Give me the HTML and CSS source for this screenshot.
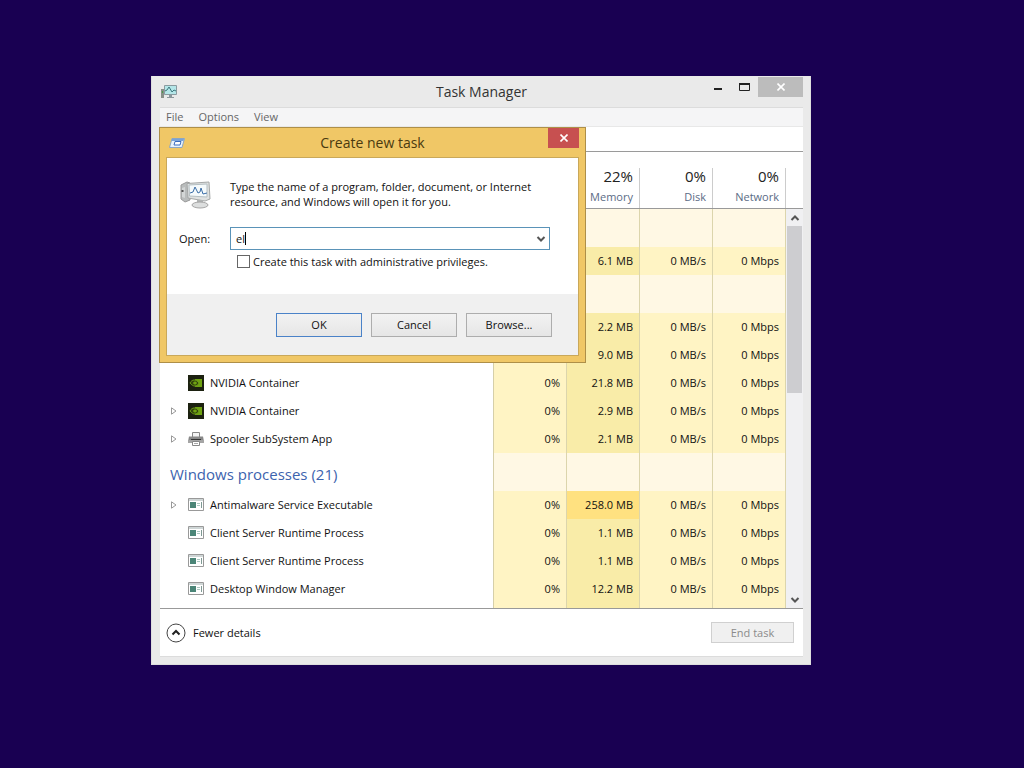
FILE: index.html
```
<!DOCTYPE html>
<html lang="en">
<head>
<meta charset="utf-8">
<title>Task Manager</title>
<link rel="stylesheet" href="styles.css">
</head>

<body>

<!-- shared icons -->
<svg class="defs" aria-hidden="true">
  <symbol id="i-arrow" viewBox="0 0 6 8">
    <path d="M.5 .8v6.4L5 4z" fill="#fff" stroke="#999"/>
  </symbol>
  <symbol id="i-nvidia" viewBox="0 0 16 16">
    <path d="M0 0h16v16H0z" fill="#1c2110"/>
    <path d="M7 4h7v8H7z" fill="#6fa312"/>
    <path d="M2 8c2-4 6-4 9 0-2 4-6 4-9 0z" fill="#33450c" stroke="#6b9a17"/>
    <path d="M5 8c1-2 3-2 4 0-1 2-3 2-4 0z" fill="#6fa312"/>
  </symbol>
  <symbol id="i-printer" viewBox="0 0 16 16">
    <path d="M4.500 1.500h7v5h-7z" fill="#f4f4f4" stroke="#888"/>
    <path d="M1 5.500h14l1 5H0z" fill="#888"/>
    <path d="M0 9h16v3H0z" fill="#a5a5a5"/>
    <path d="M3 8h10v1H3z" fill="#333"/>
    <path d="M4.500 10.500h7v4h-7z" fill="#fff" stroke="#888"/>
    <path d="M6 12.500h4" stroke="#aaa"/>
  </symbol>
  <symbol id="i-exe" viewBox="0 0 16 14">
    <path d="M.5 .5h15v12H.5z" fill="#fff" stroke="#999"/>
    <path d="M1 1h14v2H1z" fill="#cfd6d6"/>
    <path d="M2 4h6v6H2z" fill="#4b8577"/>
    <path d="M9 5.500h3M9 7.500h3" stroke="#aac8c0"/>
    <path d="M13.500 4v6" stroke="#7f9a94"/>
  </symbol>
  <symbol id="i-up" viewBox="0 0 10 6">
    <path d="M1.500 5L5 1.500 8.500 5" fill="none" stroke="#555" stroke-width="2"/>
  </symbol>
  <symbol id="i-down" viewBox="0 0 10 6">
    <path d="M1.500 1L5 4.500 8.500 1" fill="none" stroke="#555" stroke-width="2"/>
  </symbol>
  <symbol id="i-close" viewBox="0 0 8 8">
    <path d="M.5 .5l7 7M7.500 .5l-7 7" fill="none" stroke="#fff" stroke-width="1.600"/>
  </symbol>
</svg>

<div class="window">
  <div class="titlebar">
    <svg class="app-icon" viewBox="0 0 16 14">
      <path d="M0 4h3v9H0z" fill="#888f88"/>
      <path d="M1 6h1v2H1z" fill="#4a9a4a"/>
      <path d="M3.500 .5h12v9h-12z" fill="#b4e6e8" stroke="#8b9ba0"/>
      <path d="M4 6l2-1 2-3 3 5 2-2 2 1" fill="none" stroke="#3a777d"/>
      <path d="M8 10h3v2H8zM6 12h7v1H6z" fill="#8c979c"/>
    </svg>
    <h1>Task Manager</h1>
    <div class="controls">
      <button type="button" aria-label="Minimize"><svg width="8" height="8"><path d="M0 5h8v2H0z" fill="#222"/></svg></button>
      <button type="button" aria-label="Maximize"><svg width="11" height="8"><path d="M.5 1h10v6.500H.5z" fill="none" stroke="#222"/><path d="M0 0h11v2H0z" fill="#222"/></svg></button>
      <button type="button" class="close" aria-label="Close"><svg width="8" height="8"><use href="#i-close"/></svg></button>
    </div>
  </div>

  <div class="client">
    <div class="menu">
      <button type="button">File</button>
      <button type="button">Options</button>
      <button type="button">View</button>
    </div>
    <div class="tabs"></div>

    <div class="list">
      <table>
        <thead>
          <tr>
            <th class="name"></th>
            <th></th>
            <th><b>22%</b>Memory</th>
            <th><b>0%</b>Disk</th>
            <th><b>0%</b>Network</th>
          </tr>
        </thead>
        <tbody>
          <tr class="group"><th></th><td></td><td></td><td></td><td></td></tr>
          <tr><th></th><td></td><td>6.1 MB</td><td>0 MB/s</td><td>0 Mbps</td></tr>
          <tr class="group"><th></th><td></td><td></td><td></td><td></td></tr>
          <tr><th></th><td></td><td>2.2 MB</td><td>0 MB/s</td><td>0 Mbps</td></tr>
          <tr><th></th><td></td><td>9.0 MB</td><td>0 MB/s</td><td>0 Mbps</td></tr>
          <tr>
            <th><div class="proc"><i></i><svg class="icon"><use href="#i-nvidia"/></svg>NVIDIA Container</div></th>
            <td>0%</td><td>21.8 MB</td><td>0 MB/s</td><td>0 Mbps</td>
          </tr>
          <tr>
            <th><div class="proc"><i><svg width="6" height="8"><use href="#i-arrow"/></svg></i><svg class="icon"><use href="#i-nvidia"/></svg>NVIDIA Container</div></th>
            <td>0%</td><td>2.9 MB</td><td>0 MB/s</td><td>0 Mbps</td>
          </tr>
          <tr>
            <th><div class="proc"><i><svg width="6" height="8"><use href="#i-arrow"/></svg></i><svg class="icon"><use href="#i-printer"/></svg>Spooler SubSystem App</div></th>
            <td>0%</td><td>2.1 MB</td><td>0 MB/s</td><td>0 Mbps</td>
          </tr>
          <tr class="group"><th>Windows processes (21)</th><td></td><td></td><td></td><td></td></tr>
          <tr>
            <th><div class="proc"><i><svg width="6" height="8"><use href="#i-arrow"/></svg></i><svg class="icon"><use href="#i-exe"/></svg>Antimalware Service Executable</div></th>
            <td>0%</td><td class="high">258.0 MB</td><td>0 MB/s</td><td>0 Mbps</td>
          </tr>
          <tr>
            <th><div class="proc"><i></i><svg class="icon"><use href="#i-exe"/></svg>Client Server Runtime Process</div></th>
            <td>0%</td><td>1.1 MB</td><td>0 MB/s</td><td>0 Mbps</td>
          </tr>
          <tr>
            <th><div class="proc"><i></i><svg class="icon"><use href="#i-exe"/></svg>Client Server Runtime Process</div></th>
            <td>0%</td><td>1.1 MB</td><td>0 MB/s</td><td>0 Mbps</td>
          </tr>
          <tr>
            <th><div class="proc"><i></i><svg class="icon"><use href="#i-exe"/></svg>Desktop Window Manager</div></th>
            <td>0%</td><td>12.2 MB</td><td>0 MB/s</td><td>0 Mbps</td>
          </tr>
          <tr><th></th><td></td><td></td><td></td><td></td></tr>
        </tbody>
      </table>
      <div class="scroll">
        <div class="corner"></div>
        <svg width="10" height="6"><use href="#i-up"/></svg>
        <div class="thumb"></div>
        <svg width="10" height="6"><use href="#i-down"/></svg>
      </div>
    </div>

    <div class="footer">
      <button type="button" class="fewer">
        <svg width="20" height="20" viewBox="0 0 20 20">
          <circle cx="10" cy="10" r="9" fill="#fff" stroke="#444"/>
          <path d="M6.500 11.500L10 8l3.500 3.500" fill="none" stroke="#222" stroke-width="2"/>
        </svg>
        Fewer details
      </button>
      <button type="button" class="end" disabled>End task</button>
    </div>
  </div>

  <form class="dialog">
    <div class="dialog-title">
      <svg class="run-icon" viewBox="0 0 16 12">
        <path d="M3 1.500h12.500L13 10.500H.5z" fill="#e8f2fb" stroke="#8ba6c4"/>
        <path d="M3 2h12l-.5 2h-12z" fill="#7aa3d8"/>
        <path d="M6 4.500h6l-1 3.500H5z" fill="#fff" stroke="#3a6cc0"/>
      </svg>
      <h2>Create new task</h2>
      <button type="button" class="dialog-close" aria-label="Close"><svg width="8" height="8"><use href="#i-close"/></svg></button>
    </div>
    <div class="dialog-body">
      <div class="intro">
        <svg width="32" height="30" viewBox="0 0 32 30">
          <path d="M2 6l6-3 3 1v17l-5 2-4-3z" fill="#b9bcbc" stroke="#999"/>
          <path d="M3 9l3-1v11l-3-1z" fill="#d3d6d6"/>
          <path d="M2.500 11h2v2h-2z" fill="#555"/>
          <path d="M8 4.500L30 3l1 17-5 2L9 19z" fill="#dfe1e1" stroke="#a5a8a8"/>
          <path d="M10 6l18-1v13l-17.500-1z" fill="#f5fafc" stroke="#b5bfc2"/>
          <path d="M11 14l3-1 2-5 3 6 2-1 1-4 2 6 4-1" fill="none" stroke="#3b6ea8"/>
          <path d="M18 21h6v3h-6z" fill="#b0b3b3"/>
          <ellipse cx="21" cy="26" rx="8" ry="3" fill="#dcdede" stroke="#a5a5a5"/>
        </svg>
        <p>Type the name of a program, folder, document, or Internet resource, and Windows will open it for you.</p>
      </div>
      <div class="open">
        <label for="cmd">Open:</label>
        <div class="combo">
          <input type="text" id="cmd" value="el" autocomplete="off">
          <span class="caret"></span>
          <button type="button" aria-label="Show history"><svg width="10" height="6"><use href="#i-down"/></svg></button>
        </div>
      </div>
      <label class="admin"><input type="checkbox">Create this task with administrative privileges.</label>
    </div>
    <div class="dialog-buttons">
      <button type="submit" class="default">OK</button>
      <button type="button">Cancel</button>
      <button type="button">Browse...</button>
    </div>
  </form>
</div>

</body>
</html>
```
FILE: styles.css
```
* {
  box-sizing: border-box;
}

body {
  margin: 0;
  min-height: 100vh;
  background: #190052;
  color: #111;
  font: 11px/15px "Open Sans", "Noto Sans", sans-serif;
}

h1, h2, p {
  margin: 0;
  font-weight: normal;
}

button, input {
  font: inherit;
  color: inherit;
  border: 0;
  margin: 0;
  padding: 0;
  background: none;
}

svg {
  display: block;
  flex: none;
}

.defs {
  position: absolute;
  width: 0;
  height: 0;
}

/* main window */

.window {
  position: absolute;
  left: 151px;
  top: 76px;
  width: 660px;
  display: flex;
  flex-direction: column;
  padding: 0 7px 7px 8px;
  background: #eaeaea;
  border: 1px solid #dedede;
  border-top: 0;
}

.titlebar {
  display: grid;
  grid-template-columns: 99px 1fr 99px;
  height: 31px;
  align-items: center;
}

.app-icon {
  width: 16px;
  height: 14px;
  margin-left: 1px;
}

h1 {
  font-size: 14px;
  line-height: 20px;
  text-align: center;
  color: #333;
}

.controls {
  display: flex;
  align-self: start;
  justify-content: flex-end;
  margin-top: 1px;
}

.controls button {
  width: 27px;
  height: 20px;
  display: flex;
  align-items: center;
  justify-content: center;
}

.controls .close {
  width: 45px;
  background: #bcbcbc;
}

.client {
  background: #fff;
  border: 1px solid #dcdcdc;
  border-width: 1px 0;
}

.menu {
  display: flex;
  gap: 15px;
  height: 19px;
  padding: 0 0 2px 6px;
  background: #f5f5f6;
  border-bottom: 1px solid #e8e8e8;
  color: #666;
}

.tabs {
  height: 25px;
  border-bottom: 1px solid #9a9a9a;
}

/* process list */

.list {
  display: flex;
  height: 457px;
  overflow: hidden;
  border-bottom: 1px solid #999;
}

table {
  flex: 1;
  table-layout: fixed;
  border-collapse: separate;
  border-spacing: 0;
}

th {
  font-weight: normal;
  padding: 0;
  text-align: left;
}

thead th {
  width: 73px;
  height: 57px;
  padding: 11px 7px 0 0;
  text-align: right;
  color: #5b6b85;
  background: linear-gradient(#ccc, #ccc) right bottom / 1px 40px no-repeat;
  border-bottom: 1px solid #999;
}

thead .name {
  width: auto;
}

thead b {
  display: block;
  margin-bottom: 4px;
  font-size: 15px;
  line-height: 18px;
  font-weight: normal;
  color: #222;
}

tbody th {
  border-right: 1px solid #d6cfa9;
}

td {
  height: 28px;
  padding: 0 6px 2px 0;
  text-align: right;
  background: #fff4c4;
  border-right: 1px solid #dcd5ac;
}

td:nth-child(3) {
  background: #f9eca8;
}

td.high {
  background: #ffe180;
}

.group td {
  height: 38px;
  background: #fff8e4;
}

.group th {
  padding: 4px 0 0 10px;
  font-size: 15px;
  line-height: 20px;
  color: #3d63ae;
}

.proc {
  display: flex;
  align-items: center;
  padding: 0 0 2px 10px;
}

.proc i {
  width: 18px;
  padding: 1px 0 0 1px;
}

.icon {
  width: 16px;
  height: 16px;
  margin: 1px 6px -1px 0;
}

.scroll {
  width: 17px;
  display: flex;
  flex-direction: column;
  align-items: center;
  padding-bottom: 5px;
  background: #f0f0f2;
}

.corner {
  width: 100%;
  height: 57px;
  margin-bottom: 6px;
  background: #fff;
  border-bottom: 1px solid #999;
}

.thumb {
  width: 15px;
  height: 167px;
  margin: 5px 0 auto;
  background: #cdcdd0;
}

.footer {
  display: flex;
  justify-content: space-between;
  align-items: center;
  height: 47px;
  padding: 0 9px 0 6px;
}

.fewer {
  display: flex;
  align-items: center;
  gap: 7px;
}

.end {
  width: 83px;
  height: 21px;
  background: #f0f0f0;
  border: 1px solid #d0d0d0;
  color: #8b8b8b;
}

/* run dialog */

.dialog {
  position: absolute;
  left: 7px;
  top: 51px;
  width: 427px;
  padding: 0 6px 6px;
  background: #f0c766;
  border: 1px solid #ae8f48;
}

.dialog-title {
  display: grid;
  grid-template-columns: 31px 1fr 31px;
  align-items: center;
  height: 29px;
}

.run-icon {
  width: 16px;
  height: 12px;
  margin-left: 3px;
}

h2 {
  font-size: 14px;
  line-height: 20px;
  text-align: center;
  color: #4a3a10;
}

.dialog-close {
  display: flex;
  align-self: start;
  align-items: center;
  justify-content: center;
  height: 20px;
  background: #c75050;
}

.dialog-body {
  height: 137px;
  padding: 21px 28px 0 12px;
  background: #fff;
  border: 1px solid #c9a85a;
  border-bottom: 0;
}

.intro {
  display: grid;
  grid-template-columns: 51px 1fr;
}

.open {
  display: grid;
  grid-template-columns: 51px 1fr;
  align-items: center;
  margin-top: 18px;
}

.combo {
  position: relative;
  display: flex;
  height: 23px;
  border: 1px solid #5a93b8;
}

.combo input {
  flex: 1;
  min-width: 0;
  padding: 0 0 1px 5px;
  outline: 0;
}

/* text cursor after the typed command */
.caret {
  position: absolute;
  left: 14px;
  top: 4px;
  width: 1px;
  height: 13px;
  background: #000;
}

.combo button {
  width: 16px;
  display: flex;
  align-items: center;
  justify-content: center;
}

.admin {
  display: flex;
  align-items: center;
  gap: 3px;
  margin: 4px 0 0 58px;
}

.admin input {
  appearance: none;
  width: 13px;
  height: 13px;
  border: 1px solid #666;
  background: #fff;
}

.dialog-buttons {
  display: flex;
  justify-content: flex-end;
  gap: 9px;
  padding: 19px 26px 18px 0;
  background: #f0f0f0;
  border: 1px solid #c9a85a;
  border-top: 0;
}

.dialog-buttons button {
  width: 86px;
  height: 24px;
  padding-bottom: 1px;
  background: linear-gradient(#f2f2f2, #e6e6e6);
  border: 1px solid #adadad;
}

.dialog-buttons .default {
  border-color: #4a82c8;
}
```
